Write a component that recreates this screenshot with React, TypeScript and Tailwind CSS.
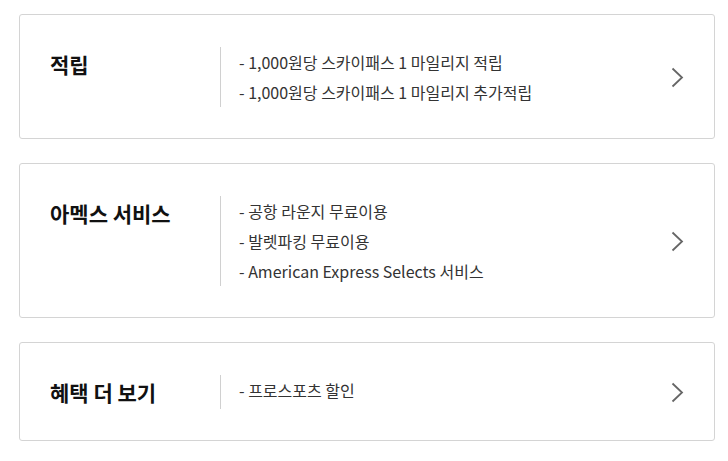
const benefits = [
  {
    title: "적립",
    items: [
      "1,000원당 스카이패스 1 마일리지 적립",
      "1,000원당 스카이패스 1 마일리지 추가적립",
    ],
  },
  {
    title: "아멕스 서비스",
    items: ["공항 라운지 무료이용", "발렛파킹 무료이용", "American Express Selects 서비스"],
  },
  {
    title: "혜택 더 보기",
    items: ["프로스포츠 할인"],
  },
];

function Chevron() {
  return (
    <svg width="13" height="21" viewBox="0 0 13 21" className="shrink-0">
      <polyline
        points="1.5,1.5 11,10.5 1.5,19.5"
        fill="none"
        stroke="#666"
        strokeWidth="1.8"
      />
    </svg>
  );
}

export default function App() {
  return (
    <div
      className="w-[728px] min-h-[461px] bg-white pt-[14px] pl-[19px] flex flex-col gap-[24px]"
      style={{ fontFamily: '"Noto Sans CJK KR", "Noto Sans", sans-serif' }}
    >
      {benefits.map((b) => (
        <div
          key={b.title}
          className="w-[696px] border border-[#d4d4d4] rounded-[3px] flex items-center pt-[32px] pb-[31px] pl-[30px] pr-[30px]"
        >
          <div className="flex flex-1 items-stretch">
            <div className="w-[170px] text-[21px] leading-[34px] font-bold text-[#111]">
              {b.title}
            </div>
            <div className="w-px bg-[#d0d0d0]" />
            <ul className="pl-[18px] text-[16px] leading-[30px] text-[#333]">
              {b.items.map((it) => (
                <li key={it}>- {it}</li>
              ))}
            </ul>
          </div>
          <Chevron />
        </div>
      ))}
    </div>
  );
}
